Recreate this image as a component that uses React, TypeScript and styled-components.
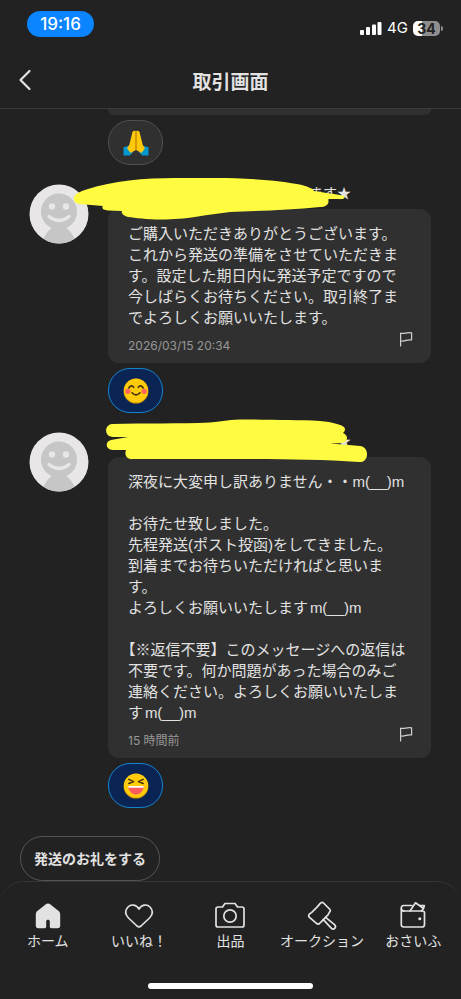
import React from "react";
import styled, { createGlobalStyle } from "styled-components";

const GlobalStyle = createGlobalStyle`
  *, *::before, *::after { box-sizing: border-box; }
  body {
    margin: 0;
    background: #222222;
    color: #e2e2e2;
    font-family: Inter, "Noto Sans CJK JP", sans-serif;
  }
  button { font: inherit; color: inherit; background: none; border: 0; padding: 0; cursor: pointer; }
`;

const Page = styled.div`
  display: flex;
  flex-direction: column;
  height: 100vh;
  overflow: hidden;
`;

const StatusBar = styled.div`
  display: flex;
  justify-content: space-between;
  align-items: flex-start;
  padding: 11px 18px 0 27px;
  height: 52px;
  flex: none;
`;

const Clock = styled.time`
  width: 67px;
  border-radius: 13px;
  background: #0a84ff;
  color: #fff;
  font-size: 17px;
  font-weight: 500;
  line-height: 26px;
  text-align: center;
`;

const Signals = styled.div`
  display: flex;
  align-items: center;
  gap: 5px;
  height: 18px;
  margin-top: 8px;
  color: #fff;
  font-size: 15px;
  line-height: 18px;
`;

const Battery = styled.div`
  display: flex;
  align-items: center;
  gap: 1px;
`;

const BatteryCell = styled.div`
  width: 27px;
  border-radius: 5px;
  background: linear-gradient(to right, #fff 34%, #8e8e8e 34%);
  color: #222;
  font-size: 14px;
  font-weight: 700;
  line-height: 15px;
  text-align: center;
`;

const BatteryTip = styled.div`
  width: 2px;
  height: 5px;
  border-radius: 0 2px 2px 0;
  background: #8e8e8e;
`;

const Header = styled.header`
  display: grid;
  grid-template-columns: 50px 1fr 50px;
  align-items: center;
  height: 57px;
  flex: none;
  border-bottom: 1px solid #3a3a3a;
`;

const BackButton = styled.button`
  display: flex;
  justify-content: center;
`;

const Title = styled.h1`
  margin: 0;
  padding-top: 5px;
  font-size: 19px;
  font-weight: 700;
  line-height: 28px;
  text-align: center;
`;

const Chat = styled.main`
  flex: 1;
  min-height: 0;
  overflow: hidden;
`;

const Message = styled.article`
  display: grid;
  grid-template-columns: 60px minmax(0, 1fr);
  column-gap: 19px;
  padding: 0 30px 0 29px;
  margin-bottom: 19px;
`;

const Avatar = styled.svg`
  width: 60px;
  height: 60px;
`;

const Body = styled.div`
  grid-column: 2;
`;

const Sender = styled.div`
  position: relative;
  height: 25px;
  font-family: "Noto Sans CJK JP", sans-serif;
  font-size: 14px;
  line-height: 16px;
`;

const SenderName = styled.div<{ $inset: number }>`
  padding-left: ${(p) => p.$inset}px;
  white-space: nowrap;
`;

const Marker = styled.svg<{ $left: number; $top: number }>`
  position: absolute;
  left: ${(p) => p.$left}px;
  top: ${(p) => p.$top}px;
  fill: #fffb40;
`;

const Bubble = styled.div`
  padding: 14px 18px 7px 20px;
  border-radius: 11px;
  background: #303030;
`;

const BubbleEnd = styled.div`
  height: 6px;
  border-radius: 0 0 11px 11px;
  background: #303030;
`;

const Text = styled.p`
  margin: 0;
  font-family: "Liberation Sans", "Noto Sans CJK JP", sans-serif;
  font-size: 15px;
  line-height: 21px;
  white-space: pre-line;
  text-spacing-trim: trim-start;
  text-autospace: normal;
`;

const BubbleFooter = styled.footer`
  display: flex;
  justify-content: space-between;
  align-items: flex-start;
  height: 28px;
`;

const Sent = styled.time`
  margin-top: 9px;
  color: #979797;
  font-size: 12px;
  line-height: 18px;
`;

const FlagButton = styled.button`
  display: flex;
  margin-top: 3px;
`;

const Reaction = styled.button<{ $active?: boolean }>`
  display: flex;
  align-items: center;
  justify-content: center;
  width: 55px;
  height: 45px;
  margin-top: 5px;
  border: 1px solid ${(p) => (p.$active ? "#1583d0" : "#505050")};
  border-radius: 22px;
  background: ${(p) => (p.$active ? "#0a2554" : "#303030")};
`;

const ThanksButton = styled.button`
  height: 45px;
  margin: 9px 0 0 20px;
  padding: 0 13px;
  border: 1px solid #555;
  border-radius: 23px;
  font-size: 14px;
  font-weight: 700;
  line-height: 20px;
`;

const BottomBar = styled.footer`
  flex: none;
  padding: 19px 2px 10px;
  border-top: 1px solid #343434;
  border-radius: 24px 24px 0 0;
  background: #222222;
`;

const Tabs = styled.nav`
  display: grid;
  grid-template-columns: repeat(5, 1fr);
`;

const Tab = styled.a`
  display: flex;
  flex-direction: column;
  align-items: center;
  color: inherit;
  text-decoration: none;
  font-size: 14px;
  line-height: 20px;
  white-space: nowrap;
`;

const HomeIndicator = styled.div`
  width: 165px;
  height: 6px;
  margin: 32px auto 0;
  border-radius: 3px;
  background: #fff;
`;

const TabIcon = ({ children }: { children: React.ReactNode }) => (
  <svg width="30" height="30" viewBox="0 0 30 30" fill="none" stroke="#e2e2e2" strokeWidth="1.7" strokeLinecap="round" strokeLinejoin="round" aria-hidden="true">
    {children}
  </svg>
);

const UserAvatar = () => (
  <Avatar viewBox="0 0 60 60" role="img" aria-label="ユーザー">
    <defs>
      <clipPath id="avatar-disc"><circle cx="30" cy="30" r="29.5" /></clipPath>
    </defs>
    <g clipPath="url(#avatar-disc)">
      <rect width="60" height="60" fill="#e8e6e7" />
      <path d="M12 62C14 54 18 47 24 43H36C42 47 46 54 48 62Z" fill="#c6c6c6" />
      <circle cx="30" cy="27.5" r="18" fill="#c6c6c6" />
      <circle cx="23" cy="22.5" r="3.2" fill="#e8e6e7" />
      <circle cx="37" cy="22.5" r="3.2" fill="#e8e6e7" />
      <path d="M20 32.5Q30 40.5 40 32.5" fill="none" stroke="#e8e6e7" strokeWidth="3.4" strokeLinecap="round" />
    </g>
  </Avatar>
);

const Flag = () => (
  <FlagButton aria-label="通報する">
    <svg width="14" height="16" viewBox="0 0 14 16" fill="none" stroke="#d0d0d0" strokeWidth="1.2" strokeLinecap="round" strokeLinejoin="round">
      <path d="M1.6 15V2.2C5 3.4 8 .8 12.6 1.8V9C8.5 8 5.5 11 1.6 9.8" />
    </svg>
  </FlagButton>
);

const FaceBase = () => (
  <>
    <circle cx="13" cy="13.2" r="12.4" fill="#d99a08" />
    <circle cx="13" cy="12.4" r="12" fill="#ffcb0a" />
  </>
);

const SmileFace = () => (
  <svg width="26" height="26" viewBox="0 0 26 26" fill="none" aria-hidden="true">
    <FaceBase />
    <circle cx="4.8" cy="13.3" r="2.6" fill="#ff655c" />
    <circle cx="21.2" cy="13.3" r="2.6" fill="#ff655c" />
    <path d="M5.8 10Q8.3 6 10.8 9.4M15.2 9.4Q17.7 6 20.2 10M9 14.8Q13 19 17 14.8" stroke="#40300b" strokeWidth="1.6" strokeLinecap="round" />
  </svg>
);

const LaughFace = () => (
  <svg width="26" height="26" viewBox="0 0 26 26" fill="none" aria-hidden="true">
    <FaceBase />
    <path d="M5.8 6.4L10.6 8.6L5.8 10.5M20.2 6.4L15.4 8.6L20.2 10.5" stroke="#40300b" strokeWidth="1.5" strokeLinecap="round" strokeLinejoin="round" />
    <path d="M5.3 13H20.7C20.4 18.4 17 21.5 13 21.5S5.6 18.4 5.3 13Z" fill="#ff5b5c" />
    <path d="M5.3 13H20.7L20.4 14.8H5.6Z" fill="#fff" />
  </svg>
);

const Hands = () => (
  <svg width="26" height="26" viewBox="0 0 26 26" aria-hidden="true">
    <path d="M.5 17.3L5 16L10 22L6.800 25.5H.5ZM25.5 17.3L21 16L16 22L19.2 25.5H25.5Z" fill="#0797cf" />
    <path d="M12.8 1C10.5.3 9.4 1.3 9.1 3.4L6.4 14.6L4.1 18.6L7.600 23L12.8 20Z" fill="#ffc90a" />
    <path d="M13.2 1C15.5.3 16.6 1.3 16.9 3.4L19.6 14.6L21.9 18.6L18.4 23L13.2 20Z" fill="#ffc90a" />
    <path d="M13 1.8V20.2" stroke="#d98b08" strokeWidth="1.1" />
  </svg>
);

const FIRST_TEXT = `ご購入いただきありがとうございます。
これから発送の準備をさせていただきま
す。設定した期日内に発送予定ですので
今しばらくお待ちください。取引終了ま
でよろしくお願いいたします。`;

const SECOND_TEXT = `深夜に大変申し訳ありません・・m(__)m

お待たせ致しました。
先程発送(ポスト投函)をしてきました。
到着までお待ちいただければと思いま
す。
よろしくお願いいたしますm(__)m

【※返信不要】このメッセージへの返信は
不要です。何か問題があった場合のみご
連絡ください。よろしくお願いいたしま
すm(__)m`;

export default function App() {
  return (
    <Page>
      <GlobalStyle />
      <StatusBar>
        <Clock>19:16</Clock>
        <Signals>
          <svg width="22" height="14" viewBox="0 0 22 14" fill="#fff" aria-hidden="true">
            <rect x="0" y="9" width="4" height="5" rx="1" />
            <rect x="6" y="6" width="4" height="8" rx="1" />
            <rect x="12" y="3.5" width="4" height="10.5" rx="1" />
            <rect x="17.5" y="1" width="4" height="13" rx="1" />
          </svg>
          <span>4G</span>
          <Battery>
            <BatteryCell>34</BatteryCell>
            <BatteryTip />
          </Battery>
        </Signals>
      </StatusBar>

      <Header>
        <BackButton aria-label="戻る">
          <svg width="14" height="22" viewBox="0 0 14 22" fill="none" stroke="#e2e2e2" strokeWidth="2.2" strokeLinecap="round" strokeLinejoin="round">
            <path d="M11.500 2L2.500 11L11.500 20" />
          </svg>
        </BackButton>
        <Title>取引画面</Title>
      </Header>

      <Chat>
        <Message>
          <Body>
            <BubbleEnd />
            <Reaction aria-label="ありがとう"><Hands /></Reaction>
          </Body>
        </Message>

        <Message>
          <UserAvatar />
          <Body>
            <Sender>
              <SenderName $inset={201}>ます★</SenderName>
              <Marker $left={-38} $top={-9} width="285" height="47" viewBox="70 175 285 47" aria-hidden="true">
                <path d="M74 200C73 195 78 192 88 189C112 181 145 178 175 178H215C245 178 280 180 302 185C308 187 312 188 314 191L340 195C346 196 346 199 341 199H328C330 204 326 207 320 207C290 210 255 211 230 212C210 214 190 219 166 219.500C150 220 136 218 128 217C123 216 121 213 122 211L108 210.500C103 210 101 208 103 206L79 204C76 203 74 202 74 200Z" />
              </Marker>
            </Sender>
            <Bubble>
              <Text>{FIRST_TEXT}</Text>
              <BubbleFooter>
                <Sent>2026/03/15 20:34</Sent>
                <Flag />
              </BubbleFooter>
            </Bubble>
            <Reaction $active aria-label="にっこり"><SmileFace /></Reaction>
          </Body>
        </Message>

        <Message>
          <UserAvatar />
          <Body>
            <Sender>
              <SenderName $inset={229}>★</SenderName>
              <Marker $left={-6} $top={-15} width="270" height="47" viewBox="102 417 270 47" aria-hidden="true">
                <path d="M112 424C145 423 180 424 210 422.500C225 421 232 419 250 419.500C275 420 300 420 320 421C332 422 345 425 345 429C345 431 344 432 343 433C347 435 348 438 346 441C344 444 336 443 331 443.500L360 446C370 447 369 463 359 462C315 459 270 459 220 459H133C127 460 124 455 126 450H113C105 450 105 441 111 440L128 437H113C104 437 104 425 112 424Z" />
              </Marker>
            </Sender>
            <Bubble>
              <Text>{SECOND_TEXT}</Text>
              <BubbleFooter>
                <Sent>15 時間前</Sent>
                <Flag />
              </BubbleFooter>
            </Bubble>
            <Reaction $active aria-label="大笑い"><LaughFace /></Reaction>
          </Body>
        </Message>

        <ThanksButton>発送のお礼をする</ThanksButton>
      </Chat>

      <BottomBar>
        <Tabs>
          <Tab href="#home">
            <TabIcon>
              <path d="M2.800 13.500C2.800 11.500 3.500 10.500 5 9.400L12.500 3.600C14.300 2.200 15.700 2.200 17.500 3.600L25 9.400C26.500 10.500 27.200 11.500 27.200 13.500V24.500C27.200 26.500 26.500 27.200 24.500 27.200H18.500C17.300 27.200 16.800 26.500 16.800 25.500V20.500C16.800 18.200 13.200 18.200 13.200 20.500V25.500C13.200 26.500 12.700 27.200 11.500 27.200H5.500C3.500 27.200 2.800 26.500 2.800 24.500Z" fill="#e2e2e2" stroke="none" />
            </TabIcon>
            ホーム
          </Tab>
          <Tab href="#likes">
            <TabIcon>
              <path d="M15 8C17.500 3.500 23 2.800 26 6C29.500 9.800 28.800 13.500 25.500 17L17 25C15.600 26.200 14.400 26.200 13 25L4.500 17C1.200 13.500.5 9.800 4 6C7 2.800 12.500 3.500 15 8Z" />
            </TabIcon>
            いいね！
          </Tab>
          <Tab href="#sell">
            <TabIcon>
              <path d="M3 6H7.500L10 2.500H20L22.500 6H27C28.500 6 29 6.500 29 8V24C29 25.500 28.500 26 27 26H3C1.500 26 1 25.500 1 24V8C1 6.500 1.500 6 3 6Z" />
              <circle cx="15" cy="15" r="6.200" />
            </TabIcon>
            出品
          </Tab>
          <Tab href="#auction">
            <TabIcon>
              <path d="M13 2.600C14.500 1 15.500 1 17 2.500L22.500 8C23.800 9.500 23.500 10.500 22.200 11.500L21.200 13.600L14.200 20.800L12.900 22C11.800 23.600 10.600 23.500 9.200 22.200L2.500 16.400C1.200 15 1.400 14 2.800 12.700L4.500 11.600L10.500 5.600Z" />
              <path d="M18.600 16.400L27.500 23.600C30 26 27 29.400 24.500 27.400L16.300 18.700" />
            </TabIcon>
            オークション
          </Tab>
          <Tab href="#wallet">
            <TabIcon>
              <path d="M5.500 10H24.500C26 10 26.500 10.500 26.500 12V23.500C26.500 25.300 25.800 26 24 26H6C4 26 3.300 25.300 3.300 23.500V7C3.300 5.500 4 4.500 5.500 4.500H14" />
              <path d="M3.500 8C3.500 9.500 4.500 10 6 10M12 10L17.500 1.800L25.500 7.500L23.500 10M22 4.500H26.300L25.500 7.500" />
              <circle cx="21.800" cy="17.800" r="1.500" fill="#e2e2e2" stroke="none" />
            </TabIcon>
            おさいふ
          </Tab>
        </Tabs>
        <HomeIndicator />
      </BottomBar>
    </Page>
  );
}
